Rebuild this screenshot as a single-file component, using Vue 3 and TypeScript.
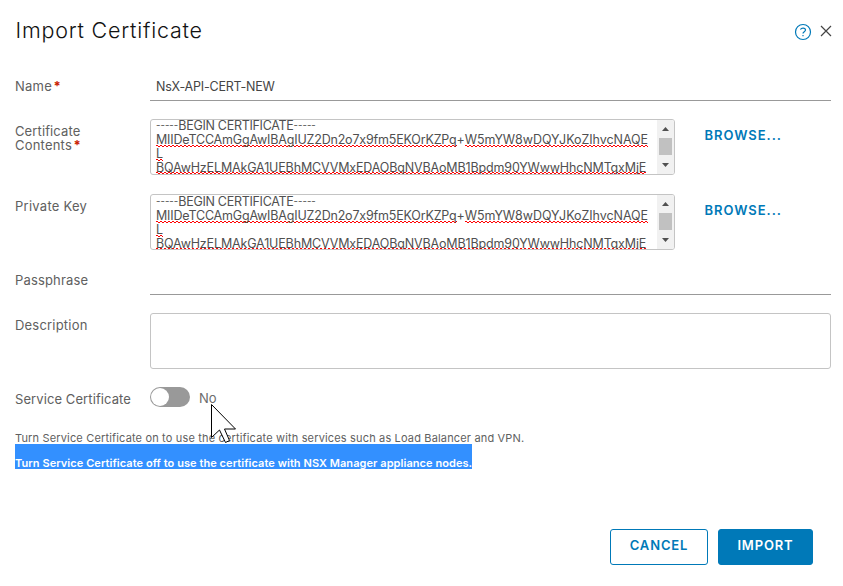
<script setup lang="ts">
import { ref } from 'vue'

interface Run { text: string; kind: 'dash' | 'plain' | 'marked' | 'marked wide' | 'plus' }

const name = ref('NsX-API-CERT-NEW')
const serviceOn = ref(false)
const lines: Run[][] = [
  [
    { text: '-----', kind: 'dash' },
    { text: 'BEGIN CERTIFICATE', kind: 'plain' },
    { text: '-----', kind: 'dash' },
  ],
  [
    { text: 'MIIDeTCCAmGgAwIBAgIUZ2Dn2o7x9fm5EKOrKZPq', kind: 'marked' },
    { text: '+', kind: 'plus' },
    { text: 'W5mYW8wDQYJKoZIhvcNAQE', kind: 'marked wide' },
  ],
  [{ text: 'L', kind: 'marked' }],
  [{ text: 'BQAwHzELMAkGA1UEBhMCVVMxEDAOBgNVBAoMB1Bpdm90YWwwHhcNMTgxMjE', kind: 'marked' }],
]
const pemFields = [
  { id: 'cert', label: ['Certificate', 'Contents'], required: true },
  { id: 'key', label: ['Private Key'], required: false },
]
</script>

<template>
  <main class="dialog">
    <header class="head">
      <h1>Import Certificate</h1>
      <svg class="help" viewBox="0 0 18 18" width="18" height="18">
        <circle cx="9" cy="9" r="7.5" />
        <path d="M6.4 6.5C7 5.5 8 5.1 9 5.1c1.5 0 2.5.8 2.5 2 0 1.700-2.500 1.600-2.500 3.500M9 12v1.300" />
      </svg>
      <svg class="close" viewBox="0 0 12 12" width="12" height="12">
        <path d="M1 1l10 10M11 1L1 11" />
      </svg>
    </header>

    <div class="row name-row">
      <label><span class="l-name">Name</span><b class="req">*</b></label>
      <div class="line-input"><span class="t-value">{{ name }}</span></div>
    </div>

    <div v-for="f in pemFields" :key="f.id" class="row pem-row" :class="f.id">
      <label>
        <span v-for="(part, i) in f.label" :key="part" class="label-line"><span :class="'l-' + f.id + i">{{ part }}</span><b v-if="f.required && i === f.label.length - 1" class="req">*</b></span>
      </label>
      <div class="area">
        <div class="pem">
          <div v-for="(line, i) in lines" :key="i" class="pem-line">
            <span v-for="(run, j) in line" :key="j" :class="run.kind">{{ run.text }}</span>
          </div>
        </div>
        <div class="scroll">
          <svg viewBox="0 0 7 4" width="7" height="4"><path d="M0 4L3.500 0L7 4z" /></svg>
          <div class="thumb"></div>
          <svg viewBox="0 0 7 4" width="7" height="4"><path d="M0 0L3.500 4L7 0z" /></svg>
        </div>
      </div>
      <button class="browse">BROWSE...</button>
    </div>

    <div class="row pass-row">
      <label><span class="l-pass">Passphrase</span></label>
      <div class="line-input"></div>
    </div>

    <div class="row desc-row">
      <label><span class="l-desc">Description</span></label>
      <div class="desc"></div>
    </div>

    <div class="row toggle-row">
      <label><span class="l-service">Service Certificate</span></label>
      <button class="toggle" :class="{ on: serviceOn }" @click="serviceOn = !serviceOn"><i></i></button>
      <span class="state">{{ serviceOn ? 'Yes' : 'No' }}</span>
      <svg class="cursor" viewBox="0 0 26 40" width="26" height="40">
        <path d="M.5 .5V33.500L8.500 26L14.500 38.500L18.500 36.500L13.500 25H24.500z" />
      </svg>
    </div>

    <p class="hint">Turn Service Certificate on to use the certificate with services such as Load Balancer and VPN.</p>
    <p class="selected">Turn Service Certificate off to use the certificate with NSX Manager appliance nodes.</p>

    <footer>
      <button class="btn cancel">CANCEL</button>
      <button class="btn import">IMPORT</button>
    </footer>
  </main>
</template>

<style>
body { margin: 0; background: #fff; }
</style>

<style scoped>
* { box-sizing: border-box; }
.dialog { width: 843px; height: 586px; padding: 16px 12px 0 15px; overflow: hidden; background: #fff; color: #606060; font: 13px/14px Inter, "Open Sans", sans-serif; display: flex; flex-direction: column; }
button { font: inherit; padding: 0; border: 0; background: none; }
h1, p { margin: 0; font-weight: 400; white-space: nowrap; }
span { white-space: pre; }
.head { display: flex; height: 58px; color: #111; margin-right: -1px; }
h1 { flex: 1; font-size: 21.5px; line-height: 28px; font-weight: 300; letter-spacing: .77px; padding-left: .5px; }
.help { margin: 7px 8px 0 0; fill: none; stroke: #0079b8; stroke-width: 1.2; }
.close { margin-top: 9px; fill: none; stroke: #444; stroke-width: 1.2; }
.row { display: flex; align-items: flex-start; flex: none; }
label { width: 135px; flex: none; padding-top: 5px; }
.label-line { display: block; }
.l-name { letter-spacing: .25px; }
.l-cert0 { letter-spacing: .12px; }
.l-cert1 { letter-spacing: .2px; }
.l-key0 { letter-spacing: .26px; }
.l-pass { letter-spacing: .16px; }
.l-desc { letter-spacing: .2px; }
.l-service { letter-spacing: .09px; }
.req { color: #c92100; margin-left: 1.5px; font-weight: 700; }
.name-row { height: 45px; }
.line-input { flex: 1; height: 27px; border-bottom: 1px solid #999; padding: 5px 6px 0; color: #444; }
.t-value { font-size: 12.5px; letter-spacing: -.21px; }
.pem-row { height: 75px; }
.pem-row.key { height: 74px; }
.area { width: 525px; height: 56px; border: 1px solid #c4c4c4; border-radius: 3px; display: flex; overflow: hidden; }
.pem { flex: 1; min-width: 0; height: 54px; overflow: hidden; padding-left: 5px; color: #505050; font-size: 12.5px; letter-spacing: -.18px; }
.key .pem { padding-top: 1px; }
.pem-line { height: 14px; line-height: 11px; display: flex; }
.dash { font-size: 9.7px; line-height: 12px; letter-spacing: 0; }
.plain { letter-spacing: -.29px; }
.marked {
  height: 14px;
  background-image: linear-gradient(90deg, #f00 2px, transparent 2px), linear-gradient(90deg, #f00 2px, transparent 2px);
  background-size: 4px 1px, 4px 1px;
  background-repeat: repeat-x;
  background-position: 0 11px, 2px 12px;
}
.pem-line:last-child .marked { background-position: 0 10px, 2px 11px; letter-spacing: -.15px; }
.wide { letter-spacing: -.05px; }
.scroll { width: 17px; flex: none; background: #f1f1f1; display: flex; flex-direction: column; align-items: center; justify-content: space-between; padding: 7px 0; }
.scroll svg { fill: #505050; }
.thumb { width: 13px; height: 17px; background: #c1c1c1; margin-bottom: 1px; }
.browse { margin: 9px 0 0 29.500px; color: #0079b8; font-weight: 600; line-height: 14px; letter-spacing: .95px; }
.pass-row { height: 45px; }
.desc-row { height: 74px; }
.desc { flex: 1; height: 56px; border: 1px solid #c4c4c4; border-radius: 3px; }
.toggle-row { position: relative; height: 45px; }
.toggle { width: 40px; height: 20px; border-radius: 10px; background: #999; padding: 1px; display: flex; }
.toggle i { width: 18px; height: 18px; border-radius: 50%; background: #fff; }
.toggle.on { background: #60b515; justify-content: flex-end; }
.state { margin: 4px 0 0 9px; color: #6c6c6c; }
.cursor { position: absolute; left: 196px; top: 17px; fill: #fff; stroke: #000; stroke-width: 1; }
.hint { height: 12px; font-size: 11px; line-height: 12px; letter-spacing: .16px; }
.selected { align-self: flex-start; width: 457px; height: 25px; background: #3390ff; color: #fff; font-size: 11px; line-height: 12px; padding-top: 13px; font-weight: 600; letter-spacing: .06px; }
footer { display: flex; gap: 10px; justify-content: flex-end; margin: 60px 18px 0 0; }
.btn { height: 36px; width: 95px; border: 1px solid #0079b8; border-radius: 3px; font-weight: 600; line-height: 14px; color: #0079b8; padding-bottom: 4px; letter-spacing: .85px; }
.cancel { width: 98px; }
.import { background: #0079b8; color: #fff; }
</style>
